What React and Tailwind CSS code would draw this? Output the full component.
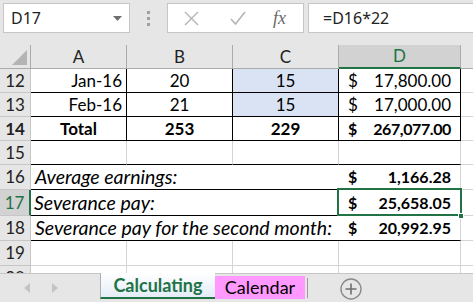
import React from 'react';

const cellFont = { fontFamily: 'Lato, "Liberation Sans", sans-serif' };

const RowHead = ({ n, active }) => (
    <div
        className={
            active
                ? 'w-[31px] shrink-0 flex items-center justify-center bg-[#d2d2d2] text-[#217346] border-r-2 border-r-[#217346] border-b border-b-[#c6c6c6] text-[17px]'
                : 'w-[31px] shrink-0 flex items-center justify-center bg-[#e6e6e6] text-[#222] border-r border-b border-[#c6c6c6] text-[17px]'
        }
    >
        {n}
    </div>
);

const Money = ({ value, bold, tight }) => (
    <div className={`flex justify-between w-full pl-[9px] pr-[9px] ${bold ? 'font-bold text-[16px]' : ''}`}>
        <span>$</span>
        <span className={tight ? 'tracking-[-0.4px]' : ''}>{value}</span>
    </div>
);

export default function App() {
    return (
        <div className="w-[473px] h-[302px] overflow-hidden bg-[#e6e6e6] flex flex-col select-none" style={cellFont}>
            {/* formula bar */}
            <div className="h-[45px] shrink-0 flex items-start pt-[3px] pl-[3px]" style={{ fontFamily: '"Noto Sans", sans-serif' }}>
                <div className="w-[127px] h-[30px] bg-white border border-[#c6c6c6] flex items-center justify-between pl-[7px] pr-[7px] text-[16px] text-[#222]">
                    <span>D17</span>
                    <svg width="9" height="5" viewBox="0 0 9 5"><path d="M0 0h9L4.5 5z" fill="#6f6f6f" /></svg>
                </div>
                <div className="w-[37px] h-[30px] flex flex-col items-center justify-center gap-[3px]">
                    <span className="w-[3px] h-[3px] bg-[#a0a0a0]" />
                    <span className="w-[3px] h-[3px] bg-[#a0a0a0]" />
                    <span className="w-[3px] h-[3px] bg-[#a0a0a0]" />
                </div>
                <div className="w-[137px] h-[30px] bg-white border border-[#c6c6c6] flex items-center">
                    <svg className="ml-[16px]" width="15" height="15" viewBox="0 0 15 15"><path d="M1 1l13 13M14 1L1 14" stroke="#b4b4b4" strokeWidth="1.4" /></svg>
                    <svg className="ml-[31px]" width="16" height="14" viewBox="0 0 16 14"><path d="M1 8l4.5 5L15 1" stroke="#b4b4b4" strokeWidth="1.6" fill="none" /></svg>
                    <span className="ml-[27px] text-[18px] italic text-[#6a6a6a]" style={{ fontFamily: '"Liberation Serif", serif' }}>fx</span>
                </div>
                <div className="ml-[4px] flex-1 h-[30px] bg-white border border-r-0 border-[#c6c6c6] flex items-center pl-[14px] text-[16px] text-[#222]">
                    =D16*22
                </div>
            </div>

            {/* column headers */}
            <div className="h-[24px] shrink-0 flex text-[17px] text-[#222]">
                <div className="w-[31px] shrink-0 border-r border-b border-[#ababab] flex items-end justify-end pr-[3px] pb-[3px]">
                    <svg width="15" height="15" viewBox="0 0 15 15"><path d="M15 0V15H0z" fill="#b4b4b4" /></svg>
                </div>
                <div className="w-[96px] shrink-0 border-r border-b border-[#ababab] flex items-center justify-center">A</div>
                <div className="w-[106px] shrink-0 border-r border-b border-[#ababab] flex items-center justify-center">B</div>
                <div className="w-[106px] shrink-0 border-r border-b border-[#ababab] flex items-center justify-center">C</div>
                <div className="w-[122px] shrink-0 border-r border-r-[#ababab] border-b-2 border-b-[#217346] bg-[#d2d2d2] text-[#217346] flex items-center justify-center">D</div>
                <div className="flex-1 border-b border-[#ababab]" />
            </div>

            {/* sheet rows */}
            <div className="h-[204px] shrink-0 overflow-hidden flex flex-col bg-white text-[17px] text-black">
                <div className="h-[24px] shrink-0 flex">
                    <RowHead n="12" />
                    <div className="w-[96px] shrink-0 border-r border-b border-black flex items-center justify-end pr-[4px]">Jan-16</div>
                    <div className="w-[106px] shrink-0 border-r border-b border-black flex items-center justify-center">20</div>
                    <div className="w-[106px] shrink-0 border-r border-b border-black bg-[#dae3f3] flex items-center justify-center">15</div>
                    <div className="w-[122px] shrink-0 border-r border-b border-black flex items-center"><Money value="17,800.00" /></div>
                    <div className="flex-1 border-b border-[#d4d4d4]" />
                </div>
                <div className="h-[24px] shrink-0 flex">
                    <RowHead n="13" />
                    <div className="w-[96px] shrink-0 border-r border-b border-black flex items-center justify-end pr-[4px]">Feb-16</div>
                    <div className="w-[106px] shrink-0 border-r border-b border-black flex items-center justify-center">21</div>
                    <div className="w-[106px] shrink-0 border-r border-b border-black bg-[#dae3f3] flex items-center justify-center">15</div>
                    <div className="w-[122px] shrink-0 border-r border-b border-black flex items-center"><Money value="17,000.00" /></div>
                    <div className="flex-1 border-b border-[#d4d4d4]" />
                </div>
                <div className="h-[24px] shrink-0 flex font-bold">
                    <RowHead n="14" />
                    <div className="w-[96px] shrink-0 border-r border-b border-black flex items-center justify-center">Total</div>
                    <div className="w-[106px] shrink-0 border-r border-b border-black flex items-center justify-center">253</div>
                    <div className="w-[106px] shrink-0 border-r border-b border-black flex items-center justify-center">229</div>
                    <div className="w-[122px] shrink-0 border-r border-b border-black flex items-center"><Money value="267,077.00" bold tight /></div>
                    <div className="flex-1 border-b border-[#d4d4d4]" />
                </div>
                <div className="h-[24px] shrink-0 flex">
                    <RowHead n="15" />
                    <div className="w-[96px] shrink-0 border-r border-r-[#d4d4d4] border-b border-b-black" />
                    <div className="w-[106px] shrink-0 border-r border-r-[#d4d4d4] border-b border-b-black" />
                    <div className="w-[106px] shrink-0 border-r border-r-[#d4d4d4] border-b border-b-black" />
                    <div className="w-[122px] shrink-0 border-r border-r-[#d4d4d4] border-b border-b-black" />
                    <div className="flex-1 border-b border-[#d4d4d4]" />
                </div>
                <div className="h-[25px] shrink-0 flex">
                    <RowHead n="16" />
                    <div className="w-[308px] shrink-0 border-b border-black flex items-center pl-[4px] italic text-[19.5px]">Average earnings:</div>
                    <div className="w-[122px] shrink-0 border-r border-r-[#d4d4d4] border-b border-b-black flex items-center"><Money value="1,166.28" bold /></div>
                    <div className="flex-1 border-b border-[#d4d4d4]" />
                </div>
                <div className="h-[26px] shrink-0 flex">
                    <RowHead n="17" active />
                    <div className="w-[308px] shrink-0 border-b border-black flex items-center pl-[3px] italic text-[19.5px]">Severance pay:</div>
                    <div className="w-[122px] shrink-0 relative border-r border-r-[#d4d4d4] border-b border-b-black flex items-center">
                        <Money value="25,658.05" bold />
                        <div className="absolute -left-[2px] -top-[2px] -right-[2px] -bottom-[1px] border-2 border-[#217346]" />
                        <div className="absolute -right-[4px] -bottom-[4px] w-[6px] h-[6px] bg-[#217346] border border-white" />
                    </div>
                    <div className="flex-1 border-b border-[#d4d4d4]" />
                </div>
                <div className="h-[25px] shrink-0 flex">
                    <RowHead n="18" />
                    <div className="w-[308px] shrink-0 border-b border-black flex items-center pl-[4px] italic text-[19.5px] whitespace-nowrap">Severance pay for the second month:</div>
                    <div className="w-[122px] shrink-0 border-r border-r-[#d4d4d4] border-b border-b-black flex items-center"><Money value="20,992.95" bold /></div>
                    <div className="flex-1 border-b border-[#d4d4d4]" />
                </div>
                <div className="h-[25px] shrink-0 flex">
                    <RowHead n="19" />
                    <div className="w-[96px] shrink-0 border-r border-b border-[#d4d4d4]" />
                    <div className="w-[106px] shrink-0 border-r border-b border-[#d4d4d4]" />
                    <div className="w-[106px] shrink-0 border-r border-b border-[#d4d4d4]" />
                    <div className="w-[122px] shrink-0 border-r border-b border-[#d4d4d4]" />
                    <div className="flex-1 border-b border-[#d4d4d4]" />
                </div>
                <div className="h-[7px] shrink-0 flex overflow-hidden">
                    <div className="w-[31px] shrink-0 bg-[#e6e6e6] border-r border-[#c6c6c6] text-[17px] text-center leading-[24px] text-[#222]">20</div>
                    <div className="w-[96px] shrink-0 border-r border-[#d4d4d4]" />
                    <div className="w-[106px] shrink-0 border-r border-[#d4d4d4]" />
                    <div className="w-[106px] shrink-0 border-r border-[#d4d4d4]" />
                    <div className="w-[122px] shrink-0 border-r border-[#d4d4d4]" />
                </div>
            </div>

            {/* sheet tabs */}
            <div className="h-[29px] shrink-0 flex items-start border-t border-[#c6c6c6] bg-[#e6e6e6] text-[17px]">
                <div className="w-[100px] h-[28px] flex items-center">
                    <svg className="ml-[24px]" width="6" height="10" viewBox="0 0 6 10"><path d="M6 0v10L0 5z" fill="#c3c3c3" /></svg>
                    <svg className="ml-[22px]" width="6" height="10" viewBox="0 0 6 10"><path d="M0 0v10l6-5z" fill="#c3c3c3" /></svg>
                </div>
                <div className="w-[115px] h-[26px] -mt-px bg-gradient-to-b from-white to-[#e4ecf7] border-l border-[#b0b0b0] border-b-2 border-b-[#217346] flex items-center justify-center font-bold text-[18px] text-[#217346]">
                    Calculating
                </div>
                <div className="w-[90px] h-[23px] mt-[2px] bg-[#ff99ff] flex items-center justify-center text-[18px] text-black">
                    Calendar
                </div>
                <div className="ml-[2px] mt-[4px] w-px h-[20px] bg-[#9a9a9a]" />
                <svg className="ml-[32px] mt-[4px]" width="22" height="22" viewBox="0 0 22 22">
                    <circle cx="11" cy="11" r="10" fill="none" stroke="#8a8a8a" strokeWidth="1.4" />
                    <path d="M11 5.5v11M5.5 11h11" stroke="#6f6f6f" strokeWidth="1.6" />
                </svg>
            </div>
        </div>
    );
}
